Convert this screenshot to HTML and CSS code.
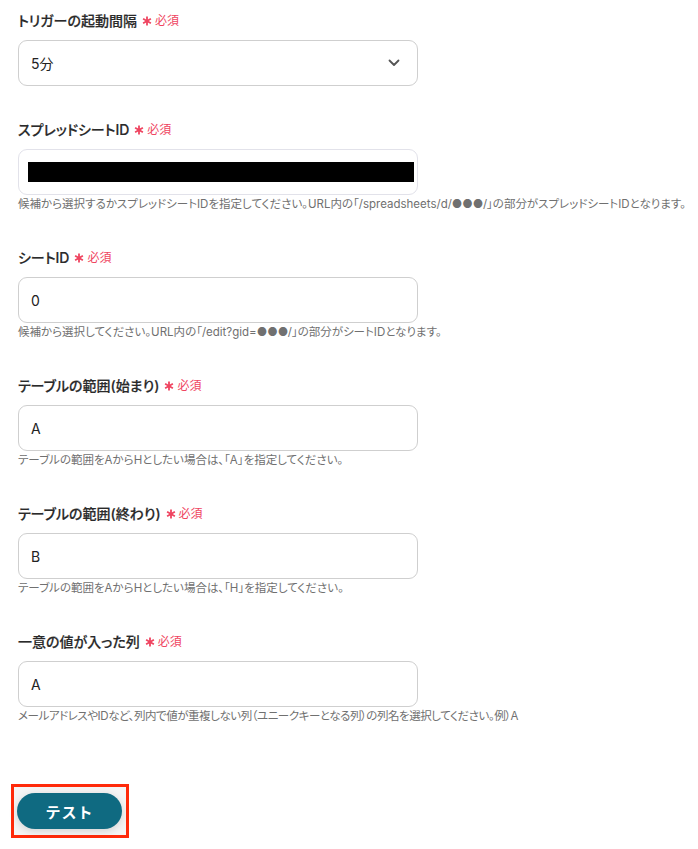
FILE: index.html
```html
<!DOCTYPE html>
<html lang="ja">
<head>
    <meta charset="UTF-8">
    <meta name="viewport" content="width=device-width, initial-scale=1.0">
    <title>トリガー設定</title>
    <link rel="stylesheet" href="styles.css">
</head>
<body>
    <div class="form">
        <div class="field field-plain">
            <div class="label">トリガーの起動間隔 <span class="req"><svg class="star" viewBox="0 0 10 10"><path d="M5 0.5v9M1.1 2.75l7.8 4.5M1.1 7.25l7.8-4.5"/></svg>必須</span></div>
            <div class="input select">
                <span>5分</span>
                <svg class="chevron" viewBox="0 0 12 8"><path d="M1.5 1.5l4.5 4.5 4.5-4.5"/></svg>
            </div>
        </div>

        <div class="field">
            <div class="label">スプレッドシートID <span class="req"><svg class="star" viewBox="0 0 10 10"><path d="M5 0.5v9M1.1 2.75l7.8 4.5M1.1 7.25l7.8-4.5"/></svg>必須</span></div>
            <div class="input redacted-wrap">
                <div class="redacted"></div>
            </div>
            <p class="help">候補から選択するかスプレッドシートIDを指定してください。URL内の「/spreadsheets/d/●●●/」の部分がスプレッドシートIDとなります。</p>
        </div>

        <div class="field">
            <div class="label">シートID <span class="req"><svg class="star" viewBox="0 0 10 10"><path d="M5 0.5v9M1.1 2.75l7.8 4.5M1.1 7.25l7.8-4.5"/></svg>必須</span></div>
            <div class="input">0</div>
            <p class="help">候補から選択してください。URL内の「/edit?gid=●●●/」の部分がシートIDとなります。</p>
        </div>

        <div class="field">
            <div class="label">テーブルの範囲(始まり) <span class="req"><svg class="star" viewBox="0 0 10 10"><path d="M5 0.5v9M1.1 2.75l7.8 4.5M1.1 7.25l7.8-4.5"/></svg>必須</span></div>
            <div class="input">A</div>
            <p class="help">テーブルの範囲をAからHとしたい場合は、「A」を指定してください。</p>
        </div>

        <div class="field">
            <div class="label">テーブルの範囲(終わり) <span class="req"><svg class="star" viewBox="0 0 10 10"><path d="M5 0.5v9M1.1 2.75l7.8 4.5M1.1 7.25l7.8-4.5"/></svg>必須</span></div>
            <div class="input">B</div>
            <p class="help">テーブルの範囲をAからHとしたい場合は、「H」を指定してください。</p>
        </div>

        <div class="field">
            <div class="label">一意の値が入った列 <span class="req"><svg class="star" viewBox="0 0 10 10"><path d="M5 0.5v9M1.1 2.75l7.8 4.5M1.1 7.25l7.8-4.5"/></svg>必須</span></div>
            <div class="input">A</div>
            <p class="help help-tight">メールアドレスやIDなど、列内で値が重複しない列（ユニークキーとなる列）の列名を選択してください。例）A</p>
        </div>

        <div class="actions">
            <div class="highlight">
                <button class="test-btn">テスト</button>
            </div>
        </div>
    </div>
</body>
</html>
```

FILE: styles.css
```css
body {
    margin: 0;
    font-family: 'Inter', 'Noto Sans CJK JP', sans-serif;
    font-feature-settings: "palt";
    color: #333;
    background: white;
}

.form {
    padding: 11px 18px 0 18px;
}

.field {
    margin-bottom: 36px;
}

.field-plain {
    margin-bottom: 34px;
}

.label {
    display: flex;
    align-items: center;
    font-size: 14px;
    font-weight: 500;
    line-height: 20px;
    margin-bottom: 9px;
    color: #2a2a2a;
    -webkit-text-stroke: 0.2px #2a2a2a;
}

.req {
    display: inline-flex;
    align-items: center;
    margin-left: 5px;
    font-size: 12px;
    font-weight: 400;
    color: #ef4561;
    -webkit-text-stroke: 0;
}

.star {
    width: 10px;
    height: 10px;
    margin-right: 3px;
    stroke: #ef4561;
    stroke-width: 1.8;
    fill: none;
}

.input {
    width: 400px;
    height: 46px;
    box-sizing: border-box;
    border: 1px solid #cfcfcf;
    border-radius: 9px;
    padding: 0 12px;
    display: flex;
    align-items: center;
    font-size: 14px;
    color: #222;
}

.select {
    justify-content: space-between;
    padding-right: 17px;
}

.chevron {
    width: 12px;
    height: 8px;
    stroke: #555;
    stroke-width: 1.8;
    fill: none;
    stroke-linecap: round;
    stroke-linejoin: round;
}

.redacted-wrap {
    border-color: #e2e2ea;
    padding: 0 3px 0 9px;
}

.redacted {
    flex: 1;
    height: 20px;
    background: #000;
}

.help {
    margin: 1px 0 0 0;
    font-size: 11.5px;
    line-height: 16px;
    color: #707070;
    white-space: nowrap;
}

.help-tight {
    letter-spacing: -0.45px;
}

.actions {
    margin-top: 60px;
}

.highlight {
    display: inline-block;
    margin-left: -7px;
    border: 3px solid #ff2a0a;
    padding: 6px 4px 6px 3px;
    background: #f5f5f5;
}

.test-btn {
    display: block;
    width: 105px;
    height: 36px;
    border: none;
    border-radius: 18px;
    background: #0f6a81;
    color: white;
    font-family: 'Inter', 'Noto Sans CJK JP', sans-serif;
    font-size: 15px;
    font-weight: 700;
    letter-spacing: 1px;
    box-shadow: 0 2px 8px rgba(0,0,0,0.15);
    cursor: pointer;
}
```
